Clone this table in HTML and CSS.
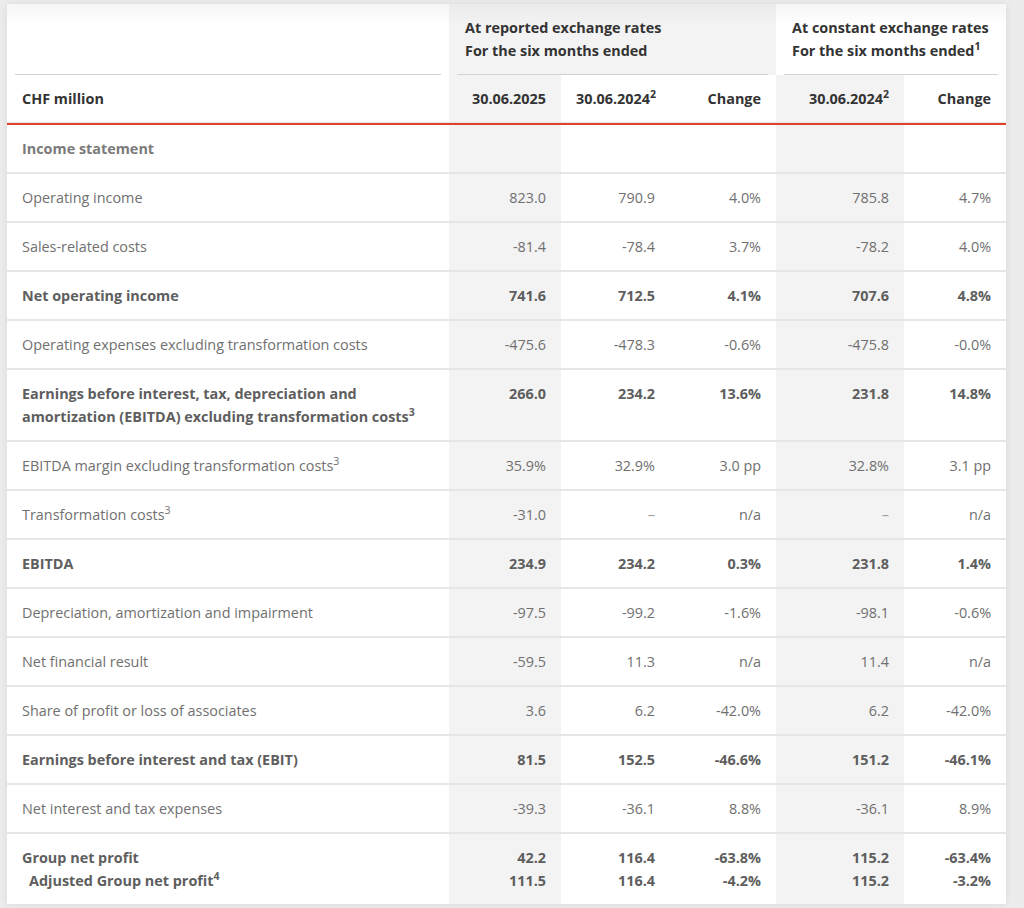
FILE: index.html
```html
<!DOCTYPE html>
<html lang="en">
<head>
<meta charset="utf-8">
<title>Key figures</title>
<link rel="stylesheet" href="styles.css">
</head>
<body>
<div class="card">
  <table class="fin">
    <colgroup>
      <col class="c-label">
      <col class="c-1">
      <col class="c-2">
      <col class="c-3">
      <col class="c-4">
      <col class="c-5">
    </colgroup>
    <thead>
      <tr class="groups">
        <th class="g g-empty"><div class="g-in">&nbsp;<br>&nbsp;</div></th>
        <th class="g g-shade" colspan="3"><div class="g-in">At reported exchange rates<br>For the six months ended</div></th>
        <th class="g" colspan="2"><div class="g-in">At constant exchange rates<br>For the six months ended<sup>1</sup></div></th>
      </tr>
      <tr class="cols">
        <th class="lbl">CHF million</th>
        <th class="num shade">30.06.2025</th>
        <th class="num">30.06.2024<sup>2</sup></th>
        <th class="num">Change</th>
        <th class="num shade">30.06.2024<sup>2</sup></th>
        <th class="num">Change</th>
      </tr>
    </thead>
    <tbody>
      <tr class="b section">
        <td class="lbl">Income statement</td>
        <td class="num shade"></td><td class="num"></td><td class="num"></td><td class="num shade"></td><td class="num"></td>
      </tr>
      <tr>
        <td class="lbl">Operating income</td>
        <td class="num shade">823.0</td><td class="num">790.9</td><td class="num">4.0%</td><td class="num shade">785.8</td><td class="num">4.7%</td>
      </tr>
      <tr>
        <td class="lbl">Sales-related costs</td>
        <td class="num shade">-81.4</td><td class="num">-78.4</td><td class="num">3.7%</td><td class="num shade">-78.2</td><td class="num">4.0%</td>
      </tr>
      <tr class="b">
        <td class="lbl">Net operating income</td>
        <td class="num shade">741.6</td><td class="num">712.5</td><td class="num">4.1%</td><td class="num shade">707.6</td><td class="num">4.8%</td>
      </tr>
      <tr>
        <td class="lbl">Operating expenses excluding transformation costs</td>
        <td class="num shade">-475.6</td><td class="num">-478.3</td><td class="num">-0.6%</td><td class="num shade">-475.8</td><td class="num">-0.0%</td>
      </tr>
      <tr class="b">
        <td class="lbl">Earnings before interest, tax, depreciation and<br>amortization (EBITDA) excluding transformation costs<sup>3</sup></td>
        <td class="num shade">266.0</td><td class="num">234.2</td><td class="num">13.6%</td><td class="num shade">231.8</td><td class="num">14.8%</td>
      </tr>
      <tr>
        <td class="lbl">EBITDA margin excluding transformation costs<sup>3</sup></td>
        <td class="num shade">35.9%</td><td class="num">32.9%</td><td class="num">3.0 pp</td><td class="num shade">32.8%</td><td class="num">3.1 pp</td>
      </tr>
      <tr>
        <td class="lbl">Transformation costs<sup>3</sup></td>
        <td class="num shade">-31.0</td><td class="num dash">–</td><td class="num">n/a</td><td class="num shade dash">–</td><td class="num">n/a</td>
      </tr>
      <tr class="b">
        <td class="lbl">EBITDA</td>
        <td class="num shade">234.9</td><td class="num">234.2</td><td class="num">0.3%</td><td class="num shade">231.8</td><td class="num">1.4%</td>
      </tr>
      <tr>
        <td class="lbl">Depreciation, amortization and impairment</td>
        <td class="num shade">-97.5</td><td class="num">-99.2</td><td class="num">-1.6%</td><td class="num shade">-98.1</td><td class="num">-0.6%</td>
      </tr>
      <tr>
        <td class="lbl">Net financial result</td>
        <td class="num shade">-59.5</td><td class="num">11.3</td><td class="num">n/a</td><td class="num shade">11.4</td><td class="num">n/a</td>
      </tr>
      <tr>
        <td class="lbl">Share of profit or loss of associates</td>
        <td class="num shade">3.6</td><td class="num">6.2</td><td class="num">-42.0%</td><td class="num shade">6.2</td><td class="num">-42.0%</td>
      </tr>
      <tr class="b">
        <td class="lbl">Earnings before interest and tax (EBIT)</td>
        <td class="num shade">81.5</td><td class="num">152.5</td><td class="num">-46.6%</td><td class="num shade">151.2</td><td class="num">-46.1%</td>
      </tr>
      <tr>
        <td class="lbl">Net interest and tax expenses</td>
        <td class="num shade">-39.3</td><td class="num">-36.1</td><td class="num">8.8%</td><td class="num shade">-36.1</td><td class="num">8.9%</td>
      </tr>
      <tr class="b last">
        <td class="lbl">Group net profit<div class="sub">Adjusted Group net profit<sup>4</sup></div></td>
        <td class="num shade">42.2<br>111.5</td><td class="num">116.4<br>116.4</td><td class="num">-63.8%<br>-4.2%</td><td class="num shade">115.2<br>115.2</td><td class="num">-63.4%<br>-3.2%</td>
      </tr>
    </tbody>
  </table>
</div>
</body>
</html>
```

FILE: styles.css
```css
html, body {
  margin: 0;
  padding: 0;
}

body {
  background: #ececec;
  font-family: "Open Sans", "Noto Sans", "Liberation Sans", sans-serif;
  font-size: 14.4px;
  color: #6f6f6f;
  padding: 4px 0 0 7px;
  height: 908px;
  box-sizing: border-box;
  overflow: hidden;
}

.card {
  position: relative;
  width: 999px;
  background: #ffffff;
  box-shadow: 0 0 8px rgba(0, 0, 0, 0.08);
}

.card::before {
  content: "";
  position: absolute;
  left: 0;
  right: 0;
  top: 0;
  height: 22px;
  background: linear-gradient(rgba(0, 0, 0, 0.035), rgba(0, 0, 0, 0));
  pointer-events: none;
}

.fin {
  width: 999px;
  border-collapse: separate;
  border-spacing: 0;
  table-layout: fixed;
}

.c-label { width: 442px; }
.c-1 { width: 112px; }
.c-2 { width: 109px; }
.c-3 { width: 106px; }
.c-4 { width: 128px; }
.c-5 { width: 102px; }

th, td {
  line-height: 23px;
  vertical-align: top;
}

/* group header row */
.groups .g {
  padding: 0 8px;
  text-align: left;
  font-weight: 700;
  color: #333333;
  vertical-align: bottom;
  white-space: nowrap;
}

.g-in {
  padding: 12px 8px 12px;
  border-bottom: 1px solid #d2d2d2;
}

.g-shade {
  background: #f3f3f3;
}

/* column header row */
.cols th {
  padding: 12px 15px 13px;
  font-weight: 700;
  color: #333333;
  border-bottom: 2px solid #e2412e;
  box-shadow: inset 0 -1px 0 #e4e4e4;
  white-space: nowrap;
}

.cols th.lbl {
  text-align: left;
}

.num {
  text-align: right;
}

.shade {
  background: #f3f3f3;
}

/* body */
tbody td {
  padding: 12px 15px 12px;
  border-bottom: 2px solid #e6e6e6;
  color: #707070;
}

tbody tr.b td {
  font-weight: 700;
  color: #5e5e5e;
}

tbody tr.section td.lbl {
  color: #7a7a7a;
}

tbody tr.last td {
  border-bottom: none;
  padding-bottom: 12px;
}

.sub {
  padding-left: 7px;
}

td.dash {
  color: #a0a0a0;
}

sup {
  font-size: 10.5px;
  line-height: 0;
  vertical-align: 6px;
}
```
